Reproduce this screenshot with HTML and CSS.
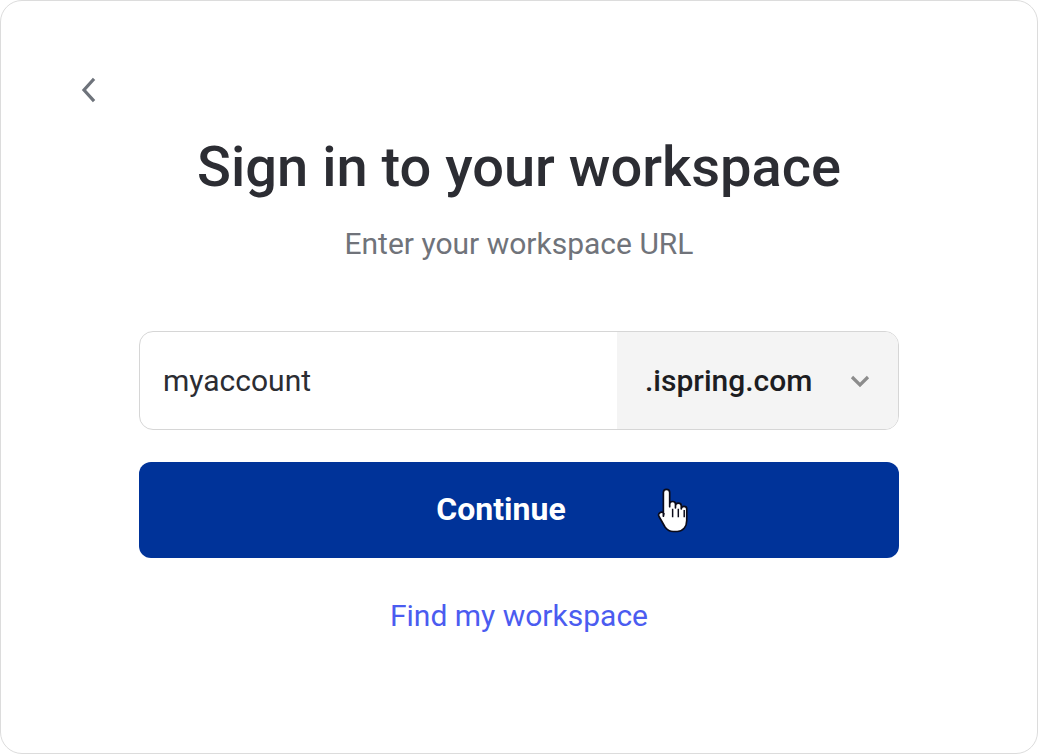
FILE: index.html
```html
<!DOCTYPE html>
<html lang="en">
<head>
<meta charset="utf-8">
<title>Sign in to your workspace</title>
<link rel="stylesheet" href="styles.css">
</head>
<body>
<div class="card">
  <div class="top">
    <button class="back" aria-label="Back">
      <svg width="16" height="26" viewBox="0 0 16 26"><path d="M12 3 L3 13 L12 23" fill="none" stroke="#6e737b" stroke-width="3.2" stroke-linecap="square"/></svg>
    </button>
  </div>
  <h1 class="title">Sign in to your workspace</h1>
  <p class="subtitle">Enter your workspace URL</p>
  <form class="form">
    <div class="field">
      <div class="field-input">myaccount</div>
      <div class="field-domain">
        <span class="domain">.ispring.com</span>
        <svg class="caret" width="22" height="14" viewBox="0 0 22 14"><path d="M3 3 L11 11 L19 3" fill="none" stroke="#8c8c8c" stroke-width="3.2"/></svg>
      </div>
    </div>
    <div class="btn-wrap">
      <button type="button" class="btn">Continue</button>
      <svg class="cursor" width="40" height="54" viewBox="0 0 38 50">
        <path d="M10 3.5c1.7 0 3 1.3 3 3V20l0 -2.5c0-1.6 1.3-2.5 2.8-2.5s2.7 1 2.7 2.5V21v-2c0-1.5 1.2-2.5 2.7-2.5s2.8 1 2.8 2.5v3c0-1.4 1.2-2.3 2.6-2.3s2.6 1 2.6 2.3v11c0 6-3.5 10.5-9 10.5h-4c-3.5 0-5.5-1.5-7.5-4L3 29.5c-1-1.4-.6-3 .7-3.8 1.300-.8 2.9-.4 3.8.8L7 29V6.5c0-1.7 1.3-3 3-3z" fill="#fff" stroke="#0b0b1a" stroke-width="1.6" stroke-linejoin="round"/>
        <path d="M15.8 22v8M21.2 22v8M26.8 23v7" stroke="#0b0b1a" stroke-width="1.4"/>
      </svg>
    </div>
    <a class="link" href="#">Find my workspace</a>
  </form>
</div>
</body>
</html>
```
FILE: styles.css
```css
html, body {
  margin: 0;
  padding: 0;
  background: #ffffff;
}
body {
  font-family: Roboto, "Liberation Sans", Arial, sans-serif;
  width: 1038px;
  height: 754px;
  box-sizing: border-box;
}
.card {
  box-sizing: border-box;
  width: 1038px;
  height: 754px;
  border: 1px solid #dcdcdc;
  border-radius: 22px;
  background: #fff;
  display: flex;
  flex-direction: column;
  align-items: center;
  padding: 76px 0 0;
}
.top {
  align-self: stretch;
  padding-left: 80px;
  height: 28px;
}
.back {
  border: 0;
  background: none;
  padding: 0;
  margin: 0;
  width: 16px;
  height: 26px;
  display: block;
  cursor: pointer;
}
.title {
  margin: 29px 0 0;
  font-size: 56px;
  line-height: 66px;
  font-weight: 500;
  color: #2c2d33;
  letter-spacing: 0;
}
.subtitle {
  margin: 26px 0 0;
  font-size: 30px;
  line-height: 36px;
  color: #70737a;
}
.form {
  margin-top: 69px;
  width: 760px;
  display: flex;
  flex-direction: column;
  align-items: stretch;
}
.field {
  box-sizing: border-box;
  height: 99px;
  border: 1px solid #d6d6d6;
  border-radius: 14px;
  display: flex;
  overflow: hidden;
}
.field-input {
  flex: 1;
  display: flex;
  align-items: center;
  padding-left: 23px;
  font-size: 30px;
  color: #2c2d33;
}
.field-domain {
  width: 281px;
  background: #f4f4f4;
  display: flex;
  align-items: center;
  padding-left: 28px;
  gap: 37px;
  box-sizing: border-box;
}
.domain {
  font-size: 30px;
  font-weight: 500;
  color: #1d1d22;
}
.btn-wrap {
  position: relative;
  margin-top: 32px;
}
.btn {
  width: 100%;
  height: 96px;
  border: 0;
  border-radius: 12px;
  background: #003399;
  color: #fff;
  font-family: inherit;
  font-size: 32px;
  font-weight: 700;
  padding: 0 36px 2px 0;
  cursor: pointer;
}
.cursor {
  position: absolute;
  left: 517px;
  top: 23px;
}
.link {
  margin-top: 40px;
  align-self: center;
  font-size: 30px;
  color: #4b5cf0;
  text-decoration: none;
  line-height: 36px;
}
```
